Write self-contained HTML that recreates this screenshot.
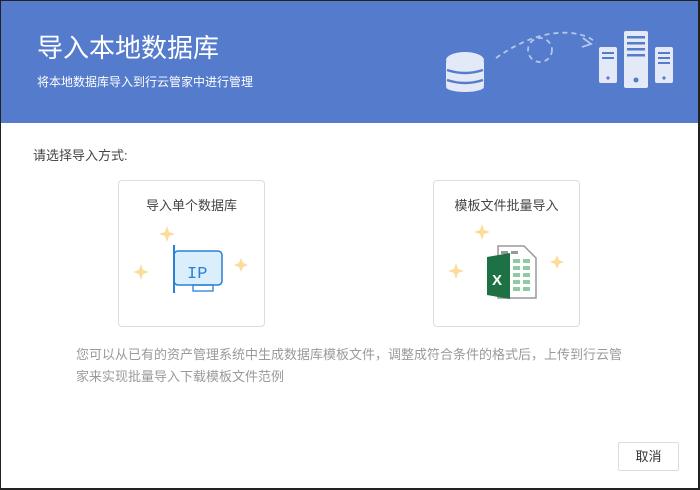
<!DOCTYPE html>
<html><head><meta charset="utf-8"><style>
*{margin:0;padding:0;box-sizing:border-box}
body{width:700px;height:490px;background:#fff;font-family:"Liberation Sans","Noto Sans CJK SC",sans-serif;position:relative;overflow:hidden}
.frame{position:absolute;left:0;top:0;width:700px;height:490px;border:1px solid #222;border-width:1px 2px 2px 1px}
.hd{position:absolute;left:0;top:0;width:700px;height:123px;background:#557bcc}
.t{position:absolute;left:37px;top:28px;font-size:26px;color:#fff}
.s{position:absolute;left:37px;top:73px;font-size:12px;color:#fff}
.q{position:absolute;left:33px;top:145px;font-size:13px;color:#444}
.card{position:absolute;top:180px;width:147px;height:147px;border:1px solid #ddd;border-radius:4px}
.card .ct{position:absolute;top:14px;width:100%;text-align:center;font-size:13px;color:#444}
.card svg{position:absolute;left:0;top:0}
.ft{position:absolute;left:76px;top:344px;font-size:13px;color:#9a9a9a;line-height:22px;width:552px}
.btn{position:absolute;left:618px;top:442px;width:61px;height:29px;border:1px solid #ddd;border-radius:2px;text-align:center;line-height:27px;font-size:13px;color:#333}
</style></head><body>
<div class="hd">
<div class="t">导入本地数据库</div>
<div class="s">将本地数据库导入到行云管家中进行管理</div>
<svg width="700" height="123" style="position:absolute;left:0;top:0">
<g fill="#e3e9f7">
<ellipse cx="465" cy="60" rx="19" ry="8"/>
<rect x="446" y="60" width="38" height="28" rx="3"/>
<ellipse cx="465" cy="87" rx="19" ry="5"/>
</g>
<g stroke="#557bcc" stroke-width="2.5" fill="none"><path d="M447 70q18 6 36 0M447 80q18 6 36 0"/></g>
<g fill="none" stroke="#b4c6ec" stroke-width="1.8" stroke-dasharray="5 4">
<path d="M496 58q40-28 75-25q18 2 25 10"/>
<circle cx="540" cy="50" r="12"/>
</g>
<path d="M583 38l8 6-9 3" stroke="#b4c6ec" stroke-width="1.8" fill="none"/>
<g fill="#e3e9f7">
<rect x="599" y="47" width="18" height="36" rx="2"/>
<rect x="624" y="31" width="24" height="57" rx="2"/>
<rect x="655" y="47" width="18" height="36" rx="2"/>
</g>
<g fill="#557bcc">
<rect x="602" y="52" width="12" height="2"/><rect x="602" y="57" width="12" height="2"/>
<rect x="627" y="36" width="18" height="2.5"/><rect x="627" y="42" width="18" height="2.5"/><rect x="627" y="48" width="18" height="2.5"/><rect x="627" y="54" width="18" height="2.5"/>
<rect x="658" y="52" width="12" height="2"/><rect x="658" y="57" width="12" height="2"/><rect x="658" y="62" width="12" height="2"/>
<circle cx="608" cy="78" r="1.6"/><circle cx="636" cy="80" r="2.5"/><circle cx="664" cy="78" r="1.6"/>
</g>
</svg>
</div>
<div class="q">请选择导入方式:</div>
<div class="card" style="left:118px">
<div class="ct">导入单个数据库</div>
<svg width="147" height="147">
<g fill="#fbdc9a"><path d="M48 45l2 6 6 2-6 2-2 6-2-6-6-2 6-2z"/><path d="M22 83l2 6 6 2-6 2-2 6-2-6-6-2 6-2z"/><path d="M122 77l2 5 5 2-5 2-2 5-2-5-5-2 5-2z"/></g>
<rect x="55" y="70" width="48" height="34" rx="4" fill="#dbeefb" stroke="#2a7fd6" stroke-width="1.5"/>
<rect x="54" y="64" width="2" height="48" fill="#2a7fd6"/>
<rect x="74" y="104" width="20" height="6" fill="none" stroke="#2a7fd6" stroke-width="1.3"/>
<text x="68" y="97" font-size="17" fill="#2a7fd6" font-family="Liberation Mono,monospace">IP</text>
</svg>
</div>
<div class="card" style="left:433px">
<div class="ct">模板文件批量导入</div>
<svg width="147" height="147">
<g fill="#fbdc9a"><path d="M48 43l2 6 6 2-6 2-2 6-2-6-6-2 6-2z"/><path d="M22 82l2 6 6 2-6 2-2 6-2-6-6-2 6-2z"/><path d="M123 74l2 5 5 2-5 2-2 5-2-5-5-2 5-2z"/></g>
<path d="M64 65h26l12 12v40h-38z" fill="#fff" stroke="#999" stroke-width="1.5"/>
<g fill="#999"><rect x="67" y="70" width="7" height="3"/><rect x="77" y="70" width="7" height="3"/></g>
<g fill="#8fcaa3"><rect x="79" y="78" width="7" height="4"/><rect x="89" y="78" width="7" height="4"/><rect x="79" y="85" width="7" height="4"/><rect x="89" y="85" width="7" height="4"/><rect x="79" y="92" width="7" height="4"/><rect x="89" y="92" width="7" height="4"/><rect x="79" y="99" width="7" height="4"/><rect x="89" y="99" width="7" height="4"/><rect x="79" y="106" width="7" height="4"/><rect x="89" y="106" width="7" height="4"/></g>
<path d="M53 76l23-4v46l-23-4z" fill="#1e7145"/>
<text x="58" y="104" font-size="15" font-weight="bold" fill="#fff">X</text>
</svg>
</div>
<div class="ft">您可以从已有的资产管理系统中生成数据库模板文件，调整成符合条件的格式后，上传到行云管家来实现批量导入下载模板文件范例</div>
<div class="btn">取消</div>
<div class="frame"></div>
</body></html>
